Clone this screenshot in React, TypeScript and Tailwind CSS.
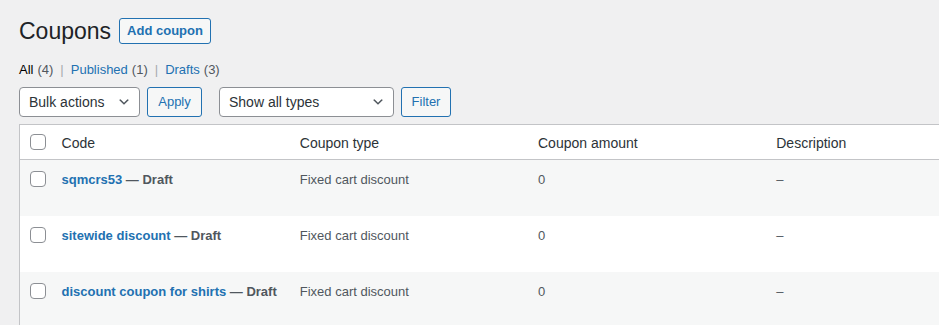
import React from 'react';

const font = { fontFamily: '"Liberation Sans", Arial, sans-serif' };

const coupons = [
  { code: 'sqmcrs53', type: 'Fixed cart discount', amount: '0' },
  { code: 'sitewide discount', type: 'Fixed cart discount', amount: '0' },
  { code: 'discount coupon for shirts', type: 'Fixed cart discount', amount: '0' },
];

const Checkbox = () => (
  <span className="block h-4 w-4 rounded-[4px] border border-[#8c8f94] bg-white" />
);

const Select = ({ label, width }: { label: string; width: string }) => (
  <div
    className={`flex h-[30px] items-center justify-between rounded-[4px] border border-[#8c8f94] bg-white pl-[9px] pr-[8px] text-[14px] text-[#2c3338] ${width}`}
  >
    <span>{label}</span>
    <svg width="14" height="14" viewBox="0 0 20 20" fill="#50575e">
      <path d="M5 6l5 5 5-5 2 1-7 7-7-7 2-1z" />
    </svg>
  </div>
);

export default function App() {
  return (
    <div
      className="h-[325px] w-[939px] overflow-hidden bg-[#f0f0f1] pl-[19px] text-[#1d2327]"
      style={font}
    >
      {/* Title */}
      <div className="mt-[16px] flex h-[30px] items-center gap-[8px]">
        <h1 className="text-[23px] font-normal leading-[30px] text-[#1d2327]">Coupons</h1>
        <button className="h-[26px] rounded-[3px] border border-[#2271b1] bg-[#f6f7f7] px-[7px] text-[13px] font-semibold text-[#2271b1]">
          Add coupon
        </button>
      </div>

      {/* Status links */}
      <div className="mt-[15px] flex h-[18px] items-center text-[13px] text-[#646970]">
        <span className="text-black">All</span>
        <span className="ml-1 text-[#50575e]">(4)</span>
        <span className="mx-[7px] text-[#a7aaad]">|</span>
        <span className="text-[#2271b1]">Published</span>
        <span className="ml-1 text-[#50575e]">(1)</span>
        <span className="mx-[7px] text-[#a7aaad]">|</span>
        <span className="text-[#2271b1]">Drafts</span>
        <span className="ml-1 text-[#50575e]">(3)</span>
      </div>

      {/* Toolbar */}
      <div className="mt-[8px] flex h-[30px] items-center">
        <Select label="Bulk actions" width="w-[121px]" />
        <button className="ml-[7px] h-[30px] w-[55px] rounded-[3px] border border-[#2271b1] bg-[#f6f7f7] text-[13px] text-[#2271b1]">
          Apply
        </button>
        <div className="ml-[17px]">
          <Select label="Show all types" width="w-[175px]" />
        </div>
        <button className="ml-[7px] h-[30px] w-[50px] rounded-[3px] border border-[#2271b1] bg-[#f6f7f7] text-[13px] text-[#2271b1]">
          Filter
        </button>
      </div>

      {/* Table */}
      <table className="mt-[7px] w-[986px] table-fixed border border-[#c3c4c7] bg-white">
        <colgroup>
          <col className="w-[32px]" />
          <col className="w-[238px]" />
          <col className="w-[238px]" />
          <col className="w-[238px]" />
          <col className="w-[238px]" />
        </colgroup>
        <thead>
          <tr className="h-[35px] border-b border-[#c3c4c7] text-left text-[14px] text-[#2c3338]">
            <th className="pl-[10px] align-middle">
              <Checkbox />
            </th>
            <th className="px-[10px] pt-[3px] font-normal">Code</th>
            <th className="px-[10px] pt-[3px] font-normal">Coupon type</th>
            <th className="px-[10px] pt-[3px] font-normal">Coupon amount</th>
            <th className="px-[10px] pt-[3px] font-normal">Description</th>
          </tr>
        </thead>
        <tbody>
          {coupons.map((c, i) => (
            <tr key={c.code} className={`h-[56px] ${i % 2 === 0 ? 'bg-[#f6f7f7]' : 'bg-white'}`}>
              <td className="pl-[10px] pt-[11px] align-top">
                <Checkbox />
              </td>
              <td className="whitespace-nowrap px-[10px] pt-[11px] align-top text-[13px] leading-[18px]">
                <span className="font-bold text-[#2271b1]">{c.code}</span>
                <span className="font-semibold text-[#50575e]"> — Draft</span>
              </td>
              <td className="px-[10px] pt-[11px] align-top text-[13px] leading-[18px] text-[#50575e]">
                {c.type}
              </td>
              <td className="px-[10px] pt-[11px] align-top text-[13px] leading-[18px] text-[#50575e]">
                {c.amount}
              </td>
              <td className="px-[10px] pt-[11px] align-top text-[13px] leading-[18px] text-[#50575e]">
                –
              </td>
            </tr>
          ))}
        </tbody>
      </table>
    </div>
  );
}
